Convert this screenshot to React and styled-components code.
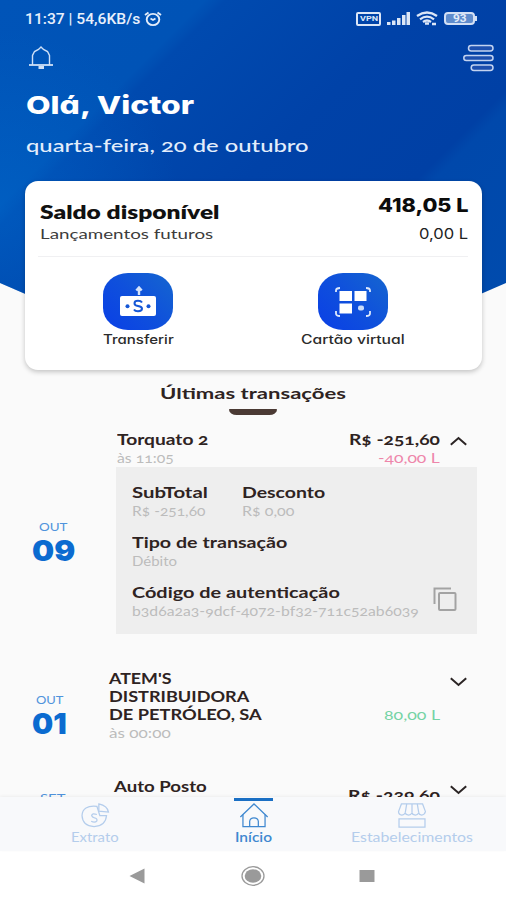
import { useLayoutEffect, useRef, useState } from "react";
import styled, { createGlobalStyle } from "styled-components";

const GlobalStyle = createGlobalStyle`
  * {
    box-sizing: border-box;
  }
  body {
    margin: 0;
    background-color: #fafafa;
  }
`;

const Color = {
  blue: "#0b6bd0",
  ink: "#2e2322",
  muted: "#bcbcbc",
  pink: "#ee86aa",
  green: "#74d3a4",
  faded: "#b4cdec",
};

const fonts = {
  raleway: `Lato, "Open Sans", sans-serif`,
  poppins: `Inter, "Noto Sans", sans-serif`,
  status: `Roboto, "Noto Sans", sans-serif`,
};

const TextBox = styled.span`
  display: block;
  flex: none;
  width: ${({ $width }) => $width}px;
  height: ${({ $line }) => $line}px;
  line-height: ${({ $line }) => $line}px;
  font-family: ${({ $font }) => fonts[$font]};
  font-size: ${({ $size }) => $size}px;
  font-weight: ${({ $weight }) => $weight};
  font-variant-numeric: ${({ $font }) =>
    $font === "raleway" ? "oldstyle-nums" : "normal"};
  font-feature-settings: ${({ $font }) =>
    $font === "poppins" ? `"cv11" 1` : "normal"};
  color: ${({ $color }) => $color};
  text-align: left;
  white-space: nowrap;
`;
const TextInner = styled.span`
  display: inline-block;
  vertical-align: top;
  transform-origin: left center;
`;

// Extended type: the text is widened until it fills its box.
const Text = ({
  children,
  width,
  line = 18,
  size = 15,
  weight = 700,
  font = "raleway",
  color = Color.ink,
}) => {
  const inner = useRef(null);
  const [scale, setScale] = useState(1);
  useLayoutEffect(() => {
    setScale(width / inner.current.offsetWidth);
  }, [width, children]);
  return (
    <TextBox
      $width={width}
      $line={line}
      $size={size}
      $weight={weight}
      $font={font}
      $color={color}
    >
      <TextInner ref={inner} style={{ transform: `scaleX(${scale})` }}>
        {children}
      </TextInner>
    </TextBox>
  );
};

const Screen = styled.div`
  display: flex;
  flex-direction: column;
  width: 506px;
  height: 900px;
  overflow: hidden;
  background-color: #fafafa;
`;
const Hero = styled.header`
  flex: none;
  height: 360px;
  margin-bottom: -179px;
  padding: 0 12px 0 25px;
  background: radial-gradient(circle at 0 210px, rgba(0, 110, 210, 0.4), transparent 180px),
    linear-gradient(
      135deg,
      #0054b8 0,
      #0053b6 145px,
      #004aaf 160px,
      #0042a8 300px,
      #0040a5 422px,
      #0048ab 434px,
      #004cae 100%
    );
  clip-path: polygon(0 0, 100% 0, 100% 283px, 476px 296px, 50% 360px, 30px 296px, 0 283px);
`;
const StatusBar = styled.div`
  display: flex;
  align-items: center;
  height: 37px;
  gap: 4px;
`;
const StatusIcons = styled.div`
  display: flex;
  align-items: center;
  gap: 6px;
  margin-left: auto;
  margin-right: 17px;
`;
const TopRow = styled.div`
  display: flex;
  align-items: center;
  justify-content: space-between;
  height: 42px;
  margin-bottom: 11px;
  padding-left: 3px;
`;
const Greeting = styled.div`
  display: flex;
  flex-direction: column;
  gap: 13px;
  padding-left: 1px;
`;

const Card = styled.section`
  position: relative;
  flex: none;
  width: 457px;
  height: 189px;
  margin-left: 25px;
  background-color: #ffffff;
  border-radius: 13px;
  box-shadow: 0 2px 5px rgba(0, 0, 0, 0.22);
`;
const Balance = styled.div`
  display: flex;
  justify-content: space-between;
  height: 76px;
  margin: 0 14px 0 13px;
  padding-left: 2px;
  border-bottom: 1px solid #f0f0f2;
`;
const BalanceColumn = styled.div`
  display: flex;
  flex-direction: column;
  align-items: ${({ $end }) => ($end ? "flex-end" : "flex-start")};
  gap: ${({ $end }) => ($end ? 7 : 2)}px;
  padding-top: ${({ $end }) => ($end ? 14 : 21)}px;
`;
const Actions = styled.div`
  display: grid;
  grid-template-columns: 1fr 1fr;
  justify-items: center;
  padding: 16px 22px 0 6px;
`;
const Action = styled.button`
  display: flex;
  flex-direction: column;
  align-items: center;
  padding: 0;
  border: none;
  background: none;
`;
const Tile = styled.span`
  display: flex;
  align-items: center;
  justify-content: center;
  width: 70px;
  height: 57px;
  margin-bottom: 1px;
  border-radius: 25px / 22px;
  background: linear-gradient(45deg, #0a3fe6, #0f50dc 50%, #1566cf);
`;

const Title = styled.div`
  display: flex;
  flex: none;
  flex-direction: column;
  align-items: center;
  gap: 5px;
  height: 45px;
  padding-top: 13px;
`;
const Underline = styled.span`
  width: 48px;
  height: 6px;
  margin-top: 1px;
  border-radius: 1px 1px 9px 9px / 1px 1px 6px 6px;
  background-color: #4b3a34;
`;
const List = styled.main`
  display: flex;
  flex: 1;
  flex-direction: column;
  gap: 35px;
  min-height: 0;
  padding-top: 13px;
  overflow: hidden;
`;
const Item = styled.article`
  display: flex;
  flex: none;
  height: ${({ $height }) => ($height ? `${$height}px` : "auto")};
`;
const DateColumn = styled.div`
  display: flex;
  flex: none;
  flex-direction: column;
  align-items: center;
  width: ${({ $width }) => $width}px;
  padding-top: ${({ $top }) => $top}px;
  padding-right: ${({ $right }) => $right}px;
`;
const Body = styled.div`
  flex: none;
  width: ${({ $width = 361 }) => $width}px;
`;
const Summary = styled.div`
  display: flex;
  padding-right: 10px;
  padding-left: ${({ $indent = 0 }) => $indent}px;
`;
const Stack = styled.div`
  display: flex;
  flex-direction: column;
  align-items: ${({ $end }) => ($end ? "flex-end" : "flex-start")};
  margin-left: ${({ $end }) => ($end ? "auto" : 0)};
  padding-top: ${({ $top = 0 }) => $top}px;
`;
const Toggle = styled.svg`
  flex: none;
  width: 17px;
  height: 10px;
  margin-top: ${({ $top }) => $top}px;
  margin-left: 10px;
  fill: none;
  stroke: #2b2424;
  stroke-width: 2;
  transform: ${({ $open }) => ($open ? "rotate(180deg)" : "none")};
`;
const Details = styled.div`
  display: flex;
  flex-direction: column;
  gap: 12px;
  height: 167px;
  padding: 15px 20px 0 16px;
  background-color: #eeeeee;
`;
const DetailRow = styled.div`
  display: flex;
  align-items: center;
`;
const Field = styled.div`
  width: ${({ $width }) => ($width ? `${$width}px` : "auto")};
`;
const CopyButton = styled.svg`
  flex: none;
  width: 24px;
  height: 26px;
  margin-left: auto;
  margin-top: -4px;
  fill: none;
  stroke: #a3a3a3;
  stroke-width: 2;
`;

const TabBar = styled.nav`
  display: flex;
  flex: none;
  height: 54px;
  background-color: #f8f9fb;
  box-shadow: 0 -1px 3px rgba(0, 0, 0, 0.05);
  position: relative;
`;
const Tab = styled.div`
  display: flex;
  flex-direction: column;
  align-items: center;
  width: ${({ $width }) => $width}px;
`;
const Marker = styled.span`
  width: 39px;
  height: 3px;
  margin-top: 1px;
  margin-bottom: 2px;
  background-color: ${({ $active }) => ($active ? "#1a6fc4" : "transparent")};
`;
const TabIcon = styled.svg`
  width: 30px;
  height: 25px;
  fill: none;
  stroke: ${({ $active }) => ($active ? "#3f88d0" : Color.faded)};
  stroke-width: 1.3;
`;
const SystemBar = styled.footer`
  display: grid;
  flex: none;
  grid-template-columns: 148.5px 116px 114px;
  align-items: center;
  justify-items: end;
  height: 49px;
  background-color: #ffffff;
`;
const SystemIcon = styled.svg`
  width: 24px;
  height: 24px;
  fill: #9a9a9a;
  stroke: none;
`;

const Bell = () => (
  <svg width="26" height="26" viewBox="0 0 26 26" fill="none" stroke="#cfe0f7" strokeWidth="1.4">
    <path d="M4.5 20V10.500L6.500 6.500L10.500 4.500L13 2L15.500 4.500L19.500 6.500L21.500 10.500V20" />
    <path d="M1 20H25" strokeWidth="1.800" />
    <path d="M10.500 22.500H16" strokeWidth="3" />
  </svg>
);

const Menu = () => (
  <svg width="31" height="29" viewBox="0 0 31 29" fill="#1d4fae" stroke="#c3d3f0" strokeWidth="1.5">
    <rect x="5.500" y="1.500" width="24.500" height="5.500" rx="2.700" />
    <rect x="0.800" y="11.500" width="29.200" height="5" rx="2.500" />
    <rect x="8.200" y="21" width="21.800" height="5.500" rx="2.700" />
  </svg>
);

const Alarm = () => (
  <svg width="18" height="16" viewBox="0 0 18 16" fill="none" stroke="#e2ecfa" strokeWidth="1.900">
    <ellipse cx="9" cy="8.500" rx="6.300" ry="5.600" />
    <path d="M1 4L4.500 1.500M17 4L13.500 1.500M6.500 7.500L9 9L11.500 7.500" />
  </svg>
);

const VpnBox = styled.div`
  display: flex;
  align-items: center;
  justify-content: center;
  width: 25px;
  height: 14px;
  border: 2px solid #dbe6f7;
  border-radius: 2px;
`;
const Battery = styled.div`
  display: flex;
  align-items: center;
  justify-content: center;
  width: 31px;
  height: 13px;
  border: 2px solid #d3e0f5;
  border-radius: 4px;
  background-color: #5f8ccd;
`;
const BatteryTip = styled.span`
  width: 2px;
  height: 5px;
  margin-left: -6px;
  background-color: #d3e0f5;
`;

const Signal = () => (
  <svg width="23" height="13" viewBox="0 0 23 13" fill="#dbe6f7">
    <path d="M0 10h3.500v3H0zM5 8.500h3.500V13H5zM10 6h3.500v7H10zM15 3h3.500v10H15zM19.500 0H23v13h-3.500z" />
  </svg>
);

const Wifi = () => (
  <svg width="22" height="15" viewBox="0 0 22 15" fill="none" stroke="#dbe6f7" strokeWidth="2.300">
    <path d="M1 5Q11 -2 21 5M4 8.300Q11 3 18 8.300M7 11Q11 8 15 11" />
    <path d="M9 12.500h4M16 13h4" strokeWidth="2.400" />
  </svg>
);

const Transfer = () => (
  <svg width="38" height="31" viewBox="0 0 38 31" fill="none">
    <rect x="1" y="10" width="36" height="20" rx="2" fill="#ffffff" />
    <path d="M20 9V3M17.300 4.500L20 1.500L22.700 4.500" stroke="#d5e3fb" strokeWidth="2.400" />
    <path
      d="M23 16.500Q22 14.800 19 14.800Q15.500 14.800 15.500 17.200Q15.500 19.500 19 20Q23 20.500 23 22.800Q23 25.200 19 25.200Q16 25.200 15 23.400"
      stroke="#1557d6"
      strokeWidth="2"
    />
    <circle cx="8.500" cy="20.300" r="2" fill="#1557d6" />
    <circle cx="29.500" cy="20.300" r="2" fill="#1557d6" />
  </svg>
);

const QrCode = () => (
  <svg width="36" height="30" viewBox="0 0 36 30" fill="#ffffff">
    <path d="M4.500 4h12.500v10H4.500zM19.500 4h12v10H19.500zM4.500 16.500h12.500v10H4.500z" />
    <rect x="23" y="18.500" width="6" height="5" rx="2" fill="#c9dcfa" />
    <path
      d="M1 5V3.500Q1 1 5 1M31 1Q35 1 35 3.500V5M35 24V26.500Q35 29 31 29M1 24V26.500Q1 29 5 29"
      fill="none"
      stroke="#dce8fc"
      strokeWidth="1.800"
    />
  </svg>
);

const Chevron = ({ open, top }) => (
  <Toggle viewBox="0 0 17 10" $open={open} $top={top}>
    <path d="M0.800 1.200L8.500 8L16.200 1.200" />
  </Toggle>
);

const Money = ({ children, width, color, line = 18 }) => (
  <Text width={width} size={13} weight={400} color={color} line={line}>
    {children}
  </Text>
);

const Day = ({ month, day, monthWidth, dayWidth, ...rest }) => (
  <DateColumn {...rest}>
    <Text width={monthWidth} size={12} weight={400} line={18} color="#4f93dc">
      {month}
    </Text>
    {day && (
      <Text width={dayWidth} size={29} weight={900} line={29} font="poppins" color={Color.blue}>
        {day}
      </Text>
    )}
  </DateColumn>
);

const Detail = ({ label, labelWidth, value, valueWidth, width }) => (
  <Field $width={width}>
    <Text width={labelWidth} line={20}>
      {label}
    </Text>
    <Money width={valueWidth} color={Color.muted}>
      {value}
    </Money>
  </Field>
);

const App = () => (
  <>
    <GlobalStyle />
    <Screen>
      <Hero>
        <StatusBar>
          <Text width={115} size={14} weight={500} font="status" color="#e8f0fc">
            11:37 | 54,6KB/s
          </Text>
          <Alarm />
          <StatusIcons>
            <VpnBox>
              <Text width={18} size={8} line={9} font="status" color="#dbe6f7">
                VPN
              </Text>
            </VpnBox>
            <Signal />
            <Wifi />
            <Battery>
              <Text width={13} size={10} line={9} font="status" color="#e3ecfa">
                93
              </Text>
            </Battery>
            <BatteryTip />
          </StatusIcons>
        </StatusBar>
        <TopRow>
          <Bell />
          <Menu />
        </TopRow>
        <Greeting>
          <Text width={168} size={25} weight={800} line={30} font="poppins" color="#ffffff">
            Olá, Victor
          </Text>
          <Text width={283} size={18} weight={500} line={24} color="#e3edfb">
            quarta-feira, 20 de outubro
          </Text>
        </Greeting>
      </Hero>

      <Card>
        <Balance>
          <BalanceColumn>
            <Text width={180} size={18} weight={800} line={20} color="#111111">
              Saldo disponível
            </Text>
            <Text width={173} size={14} weight={400} line={20} color="#3c3c3c">
              Lançamentos futuros
            </Text>
          </BalanceColumn>
          <BalanceColumn $end>
            <Text width={90} size={19} weight={800} line={22} font="poppins" color="#0c0c0c">
              418,05 L
            </Text>
            <Text width={49} size={14.5} weight={400} line={20} font="poppins" color="#222222">
              0,00 L
            </Text>
          </BalanceColumn>
        </Balance>
        <Actions>
          <Action>
            <Tile>
              <Transfer />
            </Tile>
            <Text width={71} size={12.5} weight={500} font="poppins" color="#2b2b2b">
              Transferir
            </Text>
          </Action>
          <Action>
            <Tile>
              <QrCode />
            </Tile>
            <Text width={104} size={12.5} weight={500} font="poppins" color="#2b2b2b">
              Cartão virtual
            </Text>
          </Action>
        </Actions>
      </Card>

      <Title>
        <Text width={186} size={16} line={20}>
          Últimas transações
        </Text>
        <Underline />
      </Title>

      <List>
        <Item>
          <Day month="OUT" day="09" monthWidth={29} dayWidth={43} $width={116} $top={90} $right={9} />
          <Body>
            <Summary $indent={1}>
              <Stack>
                <Text width={92} line={22}>
                  Torquato 2
                </Text>
                <Money width={57} color={Color.muted} line={17}>
                  às 11:05
                </Money>
              </Stack>
              <Stack $end>
                <Text width={91} line={22}>
                  R$ -251,60
                </Text>
                <Money width={62} color={Color.pink} line={17}>
                  -40,00 L
                </Money>
              </Stack>
              <Chevron open top={8} />
            </Summary>
            <Details>
              <DetailRow>
                <Detail label="SubTotal" labelWidth={76} value="R$ -251,60" valueWidth={73} width={110} />
                <Detail label="Desconto" labelWidth={83} value="R$ 0,00" valueWidth={53} />
              </DetailRow>
              <DetailRow>
                <Detail label="Tipo de transação" labelWidth={156} value="Débito" valueWidth={45} />
              </DetailRow>
              <DetailRow>
                <Detail
                  label="Código de autenticação"
                  labelWidth={208}
                  value="b3d6a2a3-9dcf-4072-bf32-711c52ab6039"
                  valueWidth={287}
                />
                <CopyButton viewBox="0 0 24 26">
                  <path d="M1.500 18V2.500H18" />
                  <rect x="6" y="7" width="16.500" height="17" rx="1" />
                </CopyButton>
              </DetailRow>
            </Details>
          </Body>
        </Item>

        <Item $height={73}>
          <Day month="OUT" day="01" monthWidth={28} dayWidth={35} $width={109} $top={22} $right={10} />
          <Body $width={368}>
            <Summary>
              <Stack>
                <Text width={63}>ATEM'S</Text>
                <Text width={140}>DISTRIBUIDORA</Text>
                <Text width={153}>DE PETRÓLEO, SA</Text>
                <Money width={62} color={Color.muted} line={21}>
                  às 00:00
                </Money>
              </Stack>
              <Stack $end $top={37}>
                <Money width={56} color={Color.green}>
                  80,00 L
                </Money>
              </Stack>
              <Chevron top={8} />
            </Summary>
          </Body>
        </Item>

        <Item>
          <Day month="SET" monthWidth={26} $width={114} $top={12} $right={9} />
          <Body $width={363}>
            <Summary>
              <Stack>
                <Text width={93}>Auto Posto</Text>
              </Stack>
              <Stack $end $top={9}>
                <Text width={92}>R$ -239,60</Text>
              </Stack>
              <Chevron top={8} />
            </Summary>
          </Body>
        </Item>
      </List>

      <TabBar>
        <Tab $width={190}>
          <Marker />
          <TabIcon viewBox="0 0 30 26">
            <path d="M17 3.500Q2 2 1.500 13Q2 24 14 24.500Q26 24 27 13H20Z" />
            <path d="M19 1V8.500L29 9.500Q28 3 19 1Z" />
            <path d="M17 12Q12 10 11.500 13Q12 15 14.500 15.500Q17.500 16 17 18.500Q15 21 11 19" />
          </TabIcon>
          <Text width={48} size={13} weight={400} color={Color.faded}>
            Extrato
          </Text>
        </Tab>
        <Tab $width={127}>
          <Marker $active />
          <TabIcon viewBox="0 0 30 26" $active>
            <path d="M0.800 14.500L15 1L29.200 14.500" />
            <path d="M3.500 12V24.500H26.500V12M10.500 24.500V19Q11 15.500 15 15.500Q19 15.500 19.500 19V24.500" />
          </TabIcon>
          <Text width={37} size={13} weight={600} color="#3f88d0">
            Início
          </Text>
        </Tab>
        <Tab $width={189}>
          <Marker />
          <TabIcon viewBox="0 0 30 26">
            <path d="M4 1H26L29 9Q28 12.500 25 12.500Q22 12.500 22 10Q21 12.500 18.500 12.500Q15 12.500 15 10Q14 12.500 11.500 12.500Q8 12.500 8 10Q7 12.500 4.500 12.500Q1 12 1 9Z" />
            <path d="M8 10L9.500 1M15 10V1M22 10L20.500 1M1.500 16.500H28.500V25H1.500Z" />
          </TabIcon>
          <Text width={122} size={13} weight={400} color={Color.faded}>
            Estabelecimentos
          </Text>
        </Tab>
      </TabBar>

      <SystemBar>
        <SystemIcon viewBox="0 0 24 24">
          <path d="M4.500 12L19.500 4.500V19.500Z" />
        </SystemIcon>
        <SystemIcon viewBox="0 0 24 24">
          <ellipse cx="12" cy="12" rx="11" ry="9.300" fill="none" stroke="#9a9a9a" strokeWidth="1.300" />
          <ellipse cx="12" cy="12" rx="8.300" ry="6.800" />
        </SystemIcon>
        <SystemIcon viewBox="0 0 24 24">
          <path d="M4.500 6H19.500V18H4.500Z" />
        </SystemIcon>
      </SystemBar>
    </Screen>
  </>
);

export default App;
